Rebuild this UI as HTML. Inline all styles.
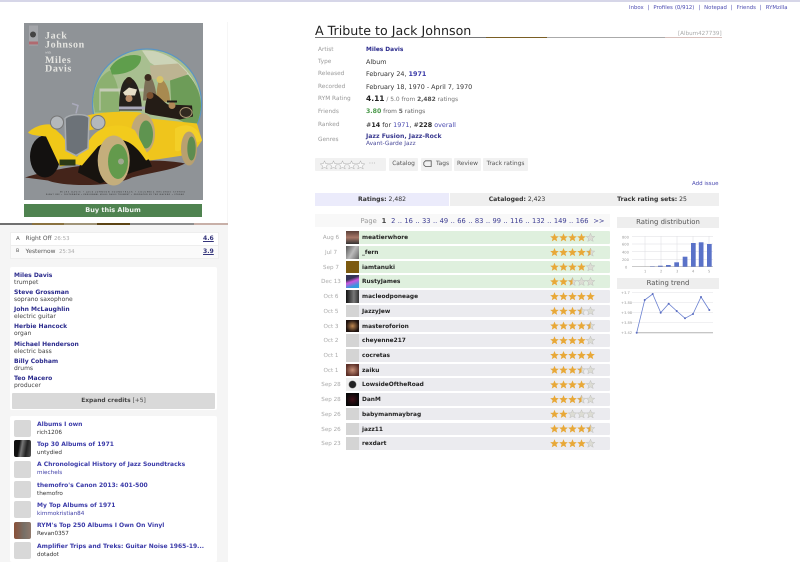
<!DOCTYPE html>
<html><head><meta charset="utf-8"><title>A Tribute to Jack Johnson</title>
<style>
html,body{margin:0;padding:0;background:#fff}
body{width:800px;height:562px;position:relative;overflow:hidden;font-family:"DejaVu Sans","Liberation Sans",sans-serif;font-size:6.4px;color:#333;text-rendering:geometricPrecision}
#p{position:absolute;left:0;top:0;width:800px;height:562px;overflow:hidden;filter:blur(.3px)}
#p div,#p svg{position:absolute}
.t{white-space:nowrap;line-height:8px;height:8px}
a,.a{color:#33339a;text-decoration:none}
b{font-weight:bold}
.l{color:#999;left:318px;font-size:5.8px}
.v{left:366px}
.n{color:#2a2a8c;font-weight:bold;left:14px;font-size:6px}
.r{color:#444;left:14px;font-size:6px}
.th{left:14px;width:17px;height:17px;background:#d8d8d8;border-radius:2px}
.lt{left:37px;color:#3a3aa8;font-weight:bold;font-size:6px}
.ls{left:37px;color:#333;font-size:5.65px}
.btn{top:158px;height:13px;background:#f1f1f1;border-radius:1px;text-align:center;line-height:13px;color:#555;font-size:5.9px;white-space:nowrap}
.row{left:346px;width:264px;height:12.6px;background:#ebebef;border-radius:1px}
.g{background:#dff0de}
.av{left:346px;width:12.6px;height:12.6px;background:#d4d4d4}
.d{left:316px;width:30px;text-align:center;color:#aaa;font-size:5.6px}
.u{left:362px;font-weight:bold;font-size:5.85px;color:#222}
.hd{left:617px;width:102px;height:11.5px;background:#eeeeee;text-align:center;line-height:11.5px;color:#555;font-size:6.9px}
.tb{top:193px;height:13px;line-height:14px;text-align:center;font-size:6.1px;color:#333}
</style></head><body><div id="p">
<div style="left:0;top:0;width:800px;height:1.5px;background:#d6d6e8"></div>
<div class="t" style="left:629px;top:4px;color:#4a4ab0;font-size:5.35px;word-spacing:.3px">Inbox &nbsp;|&nbsp; Profiles (0/912) &nbsp;|&nbsp; Notepad &nbsp;|&nbsp; Friends &nbsp;|&nbsp; RYMzilla</div>

<!-- left column -->
<div style="left:0;top:225px;width:228px;height:337px;background:#f5f5f5"></div>
<div style="left:227px;top:22px;width:1px;height:203px;background:#f6f6f6"></div>

<svg style="left:24px;top:22.5px" width="179" height="177.5" viewBox="24 22.5 179 177.5">
<rect x="24" y="22" width="179" height="178" fill="#8f9397"/>
<rect x="29" y="25" width="9" height="20" fill="#a4a6aa"/><circle cx="33" cy="34" r="3" fill="#444"/><rect x="29" y="41" width="9" height="3" fill="#b06a70"/>
<text x="45" y="38" font-family="Liberation Serif" font-weight="bold" font-size="10" fill="#e4e4e0" letter-spacing=".6">Jack</text>
<text x="45" y="47" font-family="Liberation Serif" font-weight="bold" font-size="10" fill="#e4e4e0" letter-spacing=".6">Johnson</text>
<text x="45" y="53" font-family="Liberation Serif" font-size="3.5" fill="#ddd">with</text>
<text x="45" y="62.500" font-family="Liberation Serif" font-weight="bold" font-size="10" fill="#e4e4e0" letter-spacing=".6">Miles</text>
<text x="45" y="71" font-family="Liberation Serif" font-weight="bold" font-size="10" fill="#e4e4e0" letter-spacing=".6">Davis</text>
<circle cx="147" cy="103" r="54.500" fill="#a8bf90" stroke="#5a94c4" stroke-width="1.200"/>
<path d="M142 50C165 48 190 66 198 90L175 78L150 62Z" fill="#ccd4b8"/>
<path d="M93 100C95 85 100 75 110 70C118 80 120 95 120 112H95Z" fill="#8cb070"/>
<path d="M110 68C116 56 134 52 141 56C142 66 130 74 112 74Z" fill="#5f9e4c"/>
<path d="M150 65L178 63L187 72L186 82L151 78Z" fill="#bdb492"/>
<path d="M170 80L188 74C197 84 201 95 201 106C200 115 198 122 195 127L172 116Z" fill="#6d9c58"/>
<path d="M100 88H145V91H100Z" fill="#c6ccb8"/><path d="M100 88V110" stroke="#c6ccb8" stroke-width="1"/>
<path d="M119 110C119 90 122 78 129 77C136 78 141 90 142 110Z" fill="#24201c"/>
<path d="M123 92L129 87L137 89L135 95H125Z" fill="#e6dec8"/><circle cx="129" cy="80" r="3.500" fill="#2c2218"/>
<circle cx="129" cy="98" r="3.500" fill="#b88c68"/>
<path d="M143 100C144 84 145 76 148 74C153 76 156 88 157 100Z" fill="#7c7058"/><circle cx="148" cy="77" r="3.500" fill="#3a2a1e"/>
<path d="M156 100C157 85 158 80 161 78C167 82 170 92 170 102Z" fill="#a88a50"/><circle cx="160" cy="79" r="3.500" fill="#d8c468"/>
<path d="M145 112C145 100 148 93 152 92C158 94 164 102 168 104L192 105L193 116L180 119L150 114Z" fill="#241c16"/>
<circle cx="150" cy="95" r="3.500" fill="#7a5030"/><circle cx="172" cy="105" r="3.500" fill="#b08858"/><path d="M167 100H177V102H167Z" fill="#1e1a16"/>
<ellipse cx="186" cy="112" rx="6" ry="5" fill="#322a20" stroke="#a89470" stroke-width="1"/>
<path d="M119 106H145V109H119Z" fill="#aab"/>
<path d="M25 177C60 165 150 155 185 163C172 170 150 172 132 177C112 187 62 186 48 180Z" fill="#44241a"/>
<ellipse cx="45" cy="156" rx="15" ry="21" fill="#131110"/>
<path d="M77 120C84 112 120 110 140 112L150 118L197 123L202 140L195 150L183 155L150 160L120 132C105 126 85 128 80 135Z" fill="#efc51c"/>
<path d="M175 128C185 122 198 124 202 140L197 142C194 134 188 134 184 144C182 150 178 152 175 150Z" fill="#f3cf28"/>
<ellipse cx="189" cy="148" rx="8" ry="17" fill="#b8a070"/><ellipse cx="191.500" cy="148" rx="4.200" ry="12" fill="#5e8c50"/>
<ellipse cx="143" cy="133" rx="12" ry="20" fill="#bfa87a"/><ellipse cx="146" cy="134" rx="7" ry="14" fill="#5f9450"/>
<path d="M28 132C33 127 42 123 50 124L62 135L78 158L78 163L60 166L46 136C38 135 31 135 28 132Z" fill="#f0c818"/>
<path d="M78 172C82 150 100 133 118 132C134 134 148 155 152 166L132 172L100 183Z" fill="#17130f"/>
<path d="M88 142C98 122 125 122 135 130L150 158L146 160C130 135 115 135 98 146L82 165L72 163Z" fill="#f2cb1c"/>
<ellipse cx="113.700" cy="160" rx="16" ry="25" fill="#c4ae7c"/><ellipse cx="118" cy="161" rx="10" ry="17.500" fill="#639a4c"/><circle cx="121" cy="161" r="3" fill="#a0a890"/>
<path d="M65 118C70 113 85 113 89 117L88 148L76 155L66 150Z" fill="#6c7278" stroke="#a8acb0" stroke-width="1.500"/>
<circle cx="57" cy="122" r="6.500" fill="#b4b8bc" stroke="#777"/><circle cx="98" cy="122" r="7" fill="#b4b8bc" stroke="#777"/>
<path d="M72 103L78 105L76 113" stroke="#aab" stroke-width="1.500" fill="none"/>
<rect x="59.500" y="159" width="16" height="6" fill="#2c3a14"/>
<text x="60" y="192" font-size="1.900" fill="#222" textLength="125">MILES DAVIS • JACK JOHNSON SOUNDTRACK • COLUMBIA RECORDS STEREO</text>
<text x="46" y="194.500" font-size="1.900" fill="#222" textLength="138">RIGHT OFF • YESTERNOW • PERSONNEL MILES DAVIS TRUMPET • PRODUCED BY TEO MACERO • STEREO</text>
</svg>
<div style="left:24px;top:204px;width:178px;height:13px;background:#4f8350;color:#f0f4f0;font-weight:bold;text-align:center;line-height:13px;font-size:6.5px">Buy this Album</div>
<div style="left:0;top:223px;width:228px;height:2px;background:linear-gradient(90deg,#707070 0 14%,#8a7240 14% 28%,#a09478 28% 42.500%,#5c4414 42.500% 57%,#8f8f8f 57% 85%,#c8b0a8 85%)"></div>

<div style="left:10px;top:232px;width:207px;height:12px;background:#fff;border:1px solid #eee"></div>
<div style="left:10px;top:245px;width:207px;height:12px;background:#fafafa;border:1px solid #eee"></div>
<div class="t" style="left:16px;top:235px;font-size:5.4px;color:#555">A</div><div class="t" style="left:25.500px;top:235px;font-size:5.9px;color:#555">Right Off</div><div class="t" style="left:54px;top:235px;font-size:5.4px;color:#aaa">26:53</div>
<div class="t" style="left:16px;top:248px;font-size:4.8px;color:#555">B</div><div class="t" style="left:25.500px;top:248px;font-size:5.9px;color:#555">Yesternow</div><div class="t" style="left:59px;top:248px;font-size:5.4px;color:#aaa">25:34</div>
<div class="t" style="left:203px;top:235px;font-size:6.100px;font-weight:bold;color:#33337a;text-decoration:underline">4.6</div>
<div class="t" style="left:203px;top:248px;font-size:6.100px;font-weight:bold;color:#33337a;text-decoration:underline">3.9</div>

<div style="left:10px;top:267px;width:207px;height:143px;background:#fff;border-radius:2px"></div>
<div class="t n" style="top:271.500px">Miles Davis</div><div class="t r" style="top:278.500px">trumpet</div>
<div class="t n" style="top:288.800px">Steve Grossman</div><div class="t r" style="top:295.800px">soprano saxophone</div>
<div class="t n" style="top:306px">John McLaughlin</div><div class="t r" style="top:313px">electric guitar</div>
<div class="t n" style="top:323.300px">Herbie Hancock</div><div class="t r" style="top:330.300px">organ</div>
<div class="t n" style="top:340.500px">Michael Henderson</div><div class="t r" style="top:347.500px">electric bass</div>
<div class="t n" style="top:357.800px">Billy Cobham</div><div class="t r" style="top:364.800px">drums</div>
<div class="t n" style="top:375px">Teo Macero</div><div class="t r" style="top:382px">producer</div>
<div style="left:12px;top:393px;width:203px;height:16px;background:#d9d9d9;border-radius:1px;text-align:center;line-height:16px;font-size:5.900px;color:#444"><b>Expand credits</b> [+5]</div>

<div style="left:10px;top:416px;width:207px;height:146px;background:#fff;border-radius:2px"></div>
<div class="th" style="top:420px"></div><div class="t lt" style="top:420.500px">Albums I own</div><div class="t ls" style="top:428.500px">rich1206</div>
<div class="th" style="top:440.300px;background:linear-gradient(100deg,#111 0 30%,#777 45%,#222 70%,#555)"></div><div class="t lt" style="top:440.800px">Top 30 Albums of 1971</div><div class="t ls" style="top:448.800px">untydied</div>
<div class="th" style="top:460.600px"></div><div class="t lt" style="top:461.100px">A Chronological History of Jazz Soundtracks</div><div class="t ls" style="top:469.100px;color:#4040a8">miechels</div>
<div class="th" style="top:481px"></div><div class="t lt" style="top:481.500px">themofro's Canon 2013: 401-500</div><div class="t ls" style="top:489.500px">themofro</div>
<div class="th" style="top:501.300px"></div><div class="t lt" style="top:501.800px">My Top Albums of 1971</div><div class="t ls" style="top:509.800px;color:#4040a8">kimmokristian84</div>
<div class="th" style="top:521.600px;background:linear-gradient(90deg,#8a5038,#777068 60%,#90786a)"></div><div class="t lt" style="top:522.100px">RYM's Top 250 Albums I Own On Vinyl</div><div class="t ls" style="top:530.100px">Revan0357</div>
<div class="th" style="top:542px"></div><div class="t lt" style="top:542.500px;width:167px;overflow:hidden">Amplifier Trips and Treks: Guitar Noise 1965-19...</div><div class="t ls" style="top:550.500px">dotadot</div>

<!-- main header -->
<div class="t" style="left:315px;top:24px;height:13px;line-height:13px;font-size:12.650px;color:#222">A Tribute to Jack Johnson</div>
<div style="left:315px;top:37px;width:407px;height:1px;background:linear-gradient(90deg,#777 0 42%,#7a5e24 42% 57%,#aaa 57% 86%,#d8c0bc 86%)"></div>
<div class="t" style="left:678px;top:29.500px;color:#aaa;font-size:5.600px">[Album427739]</div>

<div class="t l" style="top:45.500px">Artist</div><div class="t v" style="top:45.500px;color:#2a2a8c;font-weight:bold;font-size:5.850px">Miles Davis</div>
<div class="t l" style="top:57.500px">Type</div><div class="t v" style="top:57.500px">Album</div>
<div class="t l" style="top:70px">Released</div><div class="t v" style="top:70px">February 24, <a style="color:#3a3aa8;font-weight:bold">1971</a></div>
<div class="t l" style="top:82.500px">Recorded</div><div class="t v" style="top:82.500px">February 18, 1970 - April 7, 1970</div>
<div class="t l" style="top:95px">RYM Rating</div><div class="t v" style="top:95px;color:#777;font-size:5.900px"><b style="color:#222;font-size:7.500px">4.11</b> / 5.0 from <b style="color:#555">2,482</b> ratings</div>
<div class="t l" style="top:108px">Friends</div><div class="t v" style="top:108px;color:#666;font-size:5.900px"><b style="color:#4c9a4c;font-size:6.200px">3.80</b> from <b>5</b> ratings</div>
<div class="t l" style="top:120.500px">Ranked</div><div class="t v" style="top:120.500px">#<b style="color:#222">14</b> for <a style="color:#4a4ab0">1971</a>, #<b style="color:#222">228</b> <a style="color:#4a4ab0">overall</a></div>
<div class="t l" style="top:136px">Genres</div><div class="t v" style="top:132.500px;color:#3a3a90;font-weight:bold;font-size:6.150px">Jazz Fusion, Jazz-Rock</div>
<div class="t v" style="top:140px;color:#4a4a9a;font-size:5.800px">Avant-Garde Jazz</div>

<div class="btn" style="left:315px;width:71px;text-align:left"><span style="margin-left:54px;color:#888;letter-spacing:.4px">···</span></div>
<div class="btn" style="left:389px;width:29px">Catalog</div>
<div class="btn" style="left:421px;width:31px"><span style="margin-left:12px">Tags</span></div>
<div class="btn" style="left:454px;width:27px">Review</div>
<div class="btn" style="left:483px;width:45px">Track ratings</div>
<svg style="left:423px;top:160px" width="9" height="8" viewBox="0 0 9 8"><path d="M.8 2.500L2.500 .8H8.200V6.500H2.500L.8 5Z" fill="none" stroke="#555" stroke-width=".8"/></svg>

<div class="t" style="left:692px;top:180px;color:#4a4ab0;font-size:5.500px">Add issue</div>
<div class="tb" style="left:315px;width:134px;background:#ebebfb"><b>Ratings:</b> 2,482</div>
<div class="tb" style="left:449.500px;width:135px;background:#efefef"><b>Cataloged:</b> 2,423</div>
<div class="tb" style="left:585px;width:134px;background:#efefef"><b>Track rating sets:</b> 25</div>
<div style="left:315px;top:214px;width:295px;height:13px;background:#f8f8f8"></div>
<div class="t" style="left:360.500px;top:217px;font-size:6.700px;color:#3a3a90;word-spacing:.3px;white-space:pre"><span style="color:#999">Page</span>  <b style="color:#444">1</b>  2 .. 16 .. 33 .. 49 .. 66 .. 83 .. 99 .. 116 .. 132 .. 149 .. 166  &gt;&gt;</div>

<!-- rows -->
<div class="row g" style="top:231.300px"></div><div class="row g" style="top:246px"></div><div class="row g" style="top:260.700px"></div><div class="row g" style="top:275.400px"></div>
<div class="row" style="top:290.100px"></div><div class="row" style="top:304.800px"></div><div class="row" style="top:319.500px"></div><div class="row" style="top:334.200px"></div>
<div class="row" style="top:349px"></div><div class="row" style="top:363.700px"></div><div class="row" style="top:378.400px"></div><div class="row" style="top:393.100px"></div>
<div class="row" style="top:407.800px"></div><div class="row" style="top:422.500px"></div><div class="row" style="top:437.200px"></div>

<div class="av" style="top:231.300px;background:linear-gradient(#5a4038,#a87868 50%,#333)"></div>
<div class="av" style="top:246px;background:linear-gradient(120deg,#555,#bbb 50%,#666)"></div>
<div class="av" style="top:260.700px;background:#7c5a10"></div>
<div class="av" style="top:275.400px;background:linear-gradient(160deg,#335 0 30%,#c5d 50%,#39d 80%)"></div>
<div class="av" style="top:290.100px;background:linear-gradient(90deg,#111,#777 60%,#333)"></div>
<div class="av" style="top:304.800px"></div>
<div class="av" style="top:319.500px;background:radial-gradient(#c08850,#201410 70%)"></div>
<div class="av" style="top:334.200px"></div>
<div class="av" style="top:349px"></div>
<div class="av" style="top:363.700px;background:radial-gradient(#c89078,#5c3028 75%)"></div>
<div class="av" style="top:378.400px;background:radial-gradient(#222 35%,#eee 45%)"></div>
<div class="av" style="top:393.100px;background:radial-gradient(#401018,#080808 70%)"></div>
<div class="av" style="top:407.800px"></div><div class="av" style="top:422.500px"></div><div class="av" style="top:437.200px"></div>

<div class="t d" style="top:234.300px">Aug 6</div><div class="t u" style="top:234.300px">meatierwhore</div>
<div class="t d" style="top:249px">Jul 7</div><div class="t u" style="top:249px">_fern</div>
<div class="t d" style="top:263.700px">Sep 7</div><div class="t u" style="top:263.700px">iamtanuki</div>
<div class="t d" style="top:278.400px">Dec 13</div><div class="t u" style="top:278.400px">RustyJames</div>
<div class="t d" style="top:293.100px">Oct 6</div><div class="t u" style="top:293.100px">macleodponeage</div>
<div class="t d" style="top:307.800px">Oct 5</div><div class="t u" style="top:307.800px">JazzyJew</div>
<div class="t d" style="top:322.500px">Oct 3</div><div class="t u" style="top:322.500px">masteroforion</div>
<div class="t d" style="top:337.200px">Oct 2</div><div class="t u" style="top:337.200px">cheyenne217</div>
<div class="t d" style="top:352px">Oct 1</div><div class="t u" style="top:352px">cocretas</div>
<div class="t d" style="top:366.700px">Oct 1</div><div class="t u" style="top:366.700px">zaiku</div>
<div class="t d" style="top:381.400px">Sep 28</div><div class="t u" style="top:381.400px">LowsideOftheRoad</div>
<div class="t d" style="top:396.100px">Sep 28</div><div class="t u" style="top:396.100px">DanM</div>
<div class="t d" style="top:410.800px">Sep 26</div><div class="t u" style="top:410.800px">babymanmaybrag</div>
<div class="t d" style="top:425.500px">Sep 26</div><div class="t u" style="top:425.500px">jazz11</div>
<div class="t d" style="top:440.200px">Sep 23</div><div class="t u" style="top:440.200px">rexdart</div>

<svg style="left:0;top:0" width="800" height="562" viewBox="0 0 800 562">
<defs>
<linearGradient id="hg"><stop offset=".5" stop-color="#e8a838"/><stop offset=".5" stop-color="#dcdcd4"/></linearGradient>
<path id="sp" d="M4.500 .3L5.700 3.200L8.800 3.400L6.400 5.400L7.200 8.400L4.500 6.800L1.800 8.400L2.600 5.400L.2 3.400L3.300 3.200Z"/>
<symbol id="f" width="9" height="9" overflow="visible"><use href="#sp" fill="#e8a838"/></symbol>
<symbol id="h" width="9" height="9" overflow="visible"><use href="#sp" fill="url(#hg)" stroke="#aaa" stroke-width=".3"/></symbol>
<symbol id="e" width="9" height="9" overflow="visible"><use href="#sp" fill="#dcdcd4" stroke="#aaa" stroke-width=".3"/></symbol>
<symbol id="o" width="9" height="9" overflow="visible"><use href="#sp" fill="#f8f8f8" stroke="#aaa" stroke-width=".5"/></symbol>
<g id="r5"><use href="#f"/><use href="#f" x="9"/><use href="#f" x="18"/><use href="#f" x="27"/><use href="#f" x="36"/></g>
<g id="r45"><use href="#f"/><use href="#f" x="9"/><use href="#f" x="18"/><use href="#f" x="27"/><use href="#h" x="36"/></g>
<g id="r4"><use href="#f"/><use href="#f" x="9"/><use href="#f" x="18"/><use href="#f" x="27"/><use href="#e" x="36"/></g>
<g id="r35"><use href="#f"/><use href="#f" x="9"/><use href="#f" x="18"/><use href="#h" x="27"/><use href="#e" x="36"/></g>
<g id="r25"><use href="#f"/><use href="#f" x="9"/><use href="#h" x="18"/><use href="#e" x="27"/><use href="#e" x="36"/></g>
<g id="r2"><use href="#f"/><use href="#f" x="9"/><use href="#e" x="18"/><use href="#e" x="27"/><use href="#e" x="36"/></g>
</defs>
<use href="#r4" x="550" y="233"/><use href="#r45" x="550" y="247.700"/><use href="#r4" x="550" y="262.400"/><use href="#r25" x="550" y="277.100"/>
<use href="#r5" x="550" y="291.800"/><use href="#r35" x="550" y="306.500"/><use href="#r45" x="550" y="321.200"/><use href="#r4" x="550" y="335.900"/>
<use href="#r5" x="550" y="350.700"/><use href="#r35" x="550" y="365.400"/><use href="#r4" x="550" y="380.100"/><use href="#r35" x="550" y="394.800"/>
<use href="#r2" x="550" y="409.500"/><use href="#r45" x="550" y="424.200"/><use href="#r4" x="550" y="438.900"/>
<g transform="translate(320 160.500)"><use href="#o"/><use href="#o" x="9"/><use href="#o" x="18"/><use href="#o" x="27"/><use href="#o" x="36"/></g>
</svg>

<!-- charts -->
<div class="hd" style="top:216.500px">Rating distribution</div>
<div class="hd" style="top:277.500px">Rating trend</div>
<svg style="left:0;top:0" width="800" height="562" viewBox="0 0 800 562" font-family="DejaVu Sans" font-size="3.600" fill="#999">
<g stroke="#dcdce0" stroke-width=".5"><path d="M632 236.700H713M632 244H713M632 251.700H713M632 259.300H713"/><path d="M645 236V267M661 236V267M677 236V267M693 236V267M709 236V267"/></g>
<path d="M632 266.700H713" stroke="#aaa" stroke-width=".7"/>
<g fill="#5a72c8"><rect x="650" y="266.300" width="4.700" height=".4"/><rect x="658" y="265.700" width="4.700" height="1"/><rect x="666" y="265" width="4.700" height="1.700"/><rect x="674.300" y="262.300" width="4.700" height="4.400"/><rect x="682.700" y="256.700" width="4.700" height="10"/><rect x="691" y="243" width="4.700" height="23.700"/><rect x="698.800" y="242.300" width="4.700" height="24.400"/><rect x="707" y="244" width="4.700" height="22.700"/></g>
<text x="622" y="238.300">800</text><text x="622" y="245.600">600</text><text x="622" y="253.300">400</text><text x="622" y="261">200</text><text x="625" y="268.300">0</text>
<text x="644" y="272.500">1</text><text x="660" y="272.500">2</text><text x="676" y="272.500">3</text><text x="692" y="272.500">4</text><text x="708" y="272.500">5</text>
<g stroke="#e2e2e6" stroke-width=".5"><path d="M632 292.300H713M632 302.700H713M632 312.700H713M632 322.700H713"/></g>
<path d="M636 332.700H713" stroke="#b4b4b4" stroke-width="1"/>
<polyline points="636.700,332.700 644.700,300 652.700,294 660.700,312.700 668.700,303.700 676.700,311 685,318.300 693,314 701,297 709.300,310" fill="none" stroke="#6a80d0" stroke-width=".8"/>
<g fill="#5a6cc0"><circle cx="636.700" cy="332.700" r="1"/><circle cx="644.700" cy="300" r="1"/><circle cx="652.700" cy="294" r="1"/><circle cx="660.700" cy="312.700" r="1"/><circle cx="668.700" cy="303.700" r="1"/><circle cx="676.700" cy="311" r="1"/><circle cx="685" cy="318.300" r="1"/><circle cx="693" cy="314" r="1"/><circle cx="701" cy="297" r="1"/><circle cx="709.300" cy="310" r="1"/></g>
<text x="621" y="294">+3.7</text><text x="621" y="304">+3.80</text><text x="621" y="314">+3.98</text><text x="621" y="324">+3.89</text><text x="621" y="334">+3.42</text>
</svg>
</div></body></html>
